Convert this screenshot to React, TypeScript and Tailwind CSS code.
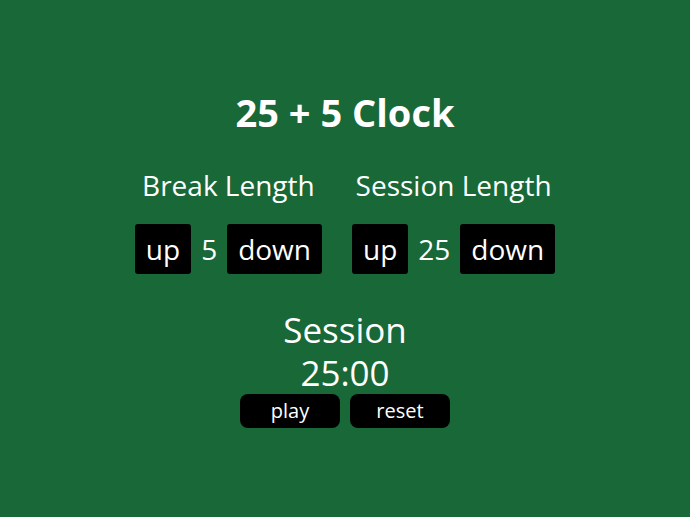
const font = { fontFamily: '"Open Sans", "Noto Sans", sans-serif' };

function LengthControl({ label, value }: { label: string; value: number }) {
  return (
    <div className="flex flex-col items-center">
      <div className="h-[42px] text-[28px] leading-[42px]">{label}</div>
      <div className="mt-[18px] flex items-center gap-[10px]">
        <button type="button" className="h-[50px] rounded-[3px] bg-black px-[11px] text-[28px] text-white">up</button>
        <span className="text-[28px]">{value}</span>
        <button type="button" className="h-[50px] rounded-[3px] bg-black px-[11px] text-[28px] text-white">down</button>
      </div>
    </div>
  );
}

export default function App() {
  return (
    <div style={font} className="flex h-[517px] w-full flex-col items-center bg-[#186838] pt-[89px] text-white">
      <h1 className="h-[46px] text-[38px] font-bold leading-[46px]">25 + 5 Clock</h1>
      <div className="mt-[29px] flex gap-[30px]">
        <LengthControl label="Break Length" value={5} />
        <LengthControl label="Session Length" value={25} />
      </div>
      <div className="mt-[34px] text-[35px] leading-[44px]">Session</div>
      <div className="text-[35px] leading-[42px]">25:00</div>
      <div className="flex gap-[10px]">
        <button type="button" className="h-[34px] w-[100px] rounded-[8px] bg-black text-[20px] text-white">play</button>
        <button type="button" className="h-[34px] w-[100px] rounded-[8px] bg-black text-[20px] text-white">reset</button>
      </div>
    </div>
  );
}
